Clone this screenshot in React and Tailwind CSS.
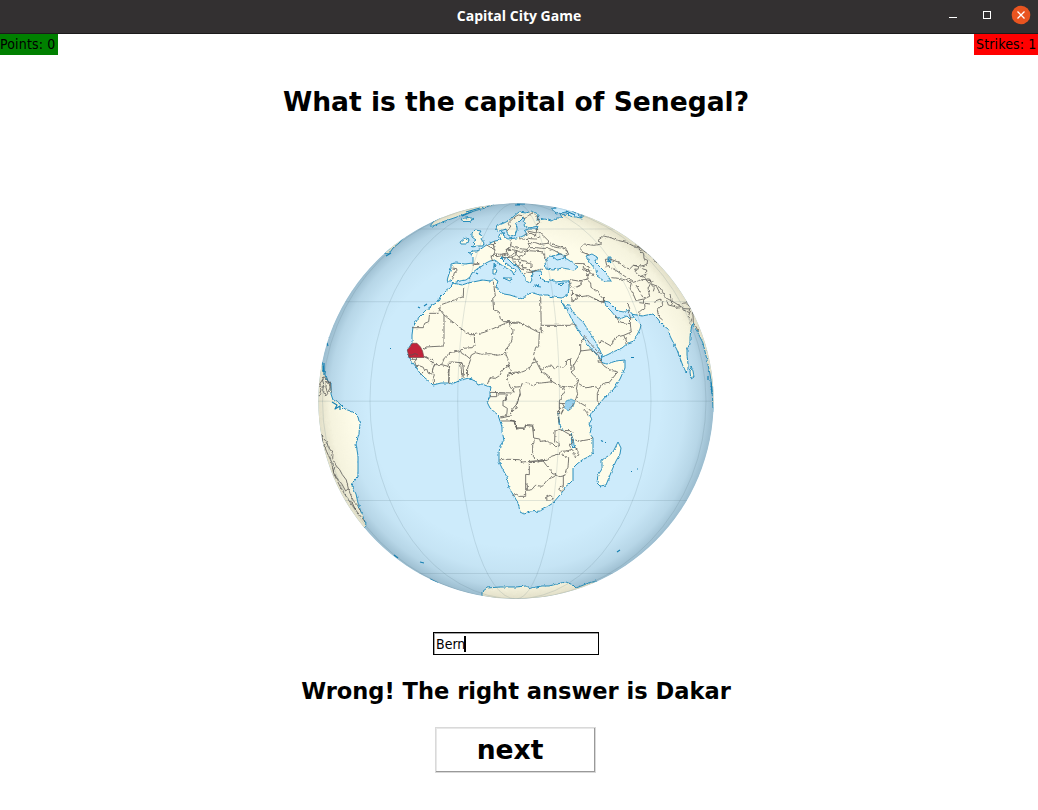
import React from "react";

const AFRO_EURASIA =
  "M453 283L450 288L446 291L440 297L438 302L431 306L425 311L419 317L413 327L412 335L412 343L408 349L409 357L413 363L417 368L419 372L425 378L430 382L433 385L441 383L450 383L452 384L461 380L469 378L472 379L475 381L478 385L482 384L487 386L491 387L490 392L490 397L487 402L490 408L498 415L500 421L502 427L502 431L504 440L500 446L499 453L499 462L503 470L507 477L509 488L514 496L518 503L519 507L520 512L524 514L530 512L540 511L547 507L553 503L559 496L563 491L565 487L569 484L573 480L573 475L573 468L577 464L582 460L588 457L593 453L593 446L593 438L590 434L591 429L589 424L592 419L590 416L593 411L600 403L606 396L613 390L620 379L625 368L625 360L616 361L607 364L603 363L600 360L602 357L607 355L613 352L622 348L628 343L634 341L638 333L640 329L641 325L636 320L631 314L642 316L647 315L653 314L658 319L660 322L663 325L668 329L670 336L677 350L683 366L686 372L688 370L688 363L687 356L687 350L690 343L690 337L691 330L692 324L697 331L703 343L707 360L710 374L712 387L713 410L740 410L740 190L582 190L582 218L577 215L574 217L570 212L565 215L560 213L562 218L557 218L551 221L545 219L537 220L538 214L532 211L526 213L519 212L513 217L508 221L504 223L497 226L496 229L499 231L503 230L506 229L508 235L512 237L515 235L517 230L517 227L516 224L519 222L523 218L525 219L523 222L525 226L529 228L538 226L537 229L528 229L525 231L527 234L521 237L516 238L508 239L504 237L503 232L499 235L501 240L495 241L490 243L485 246L478 251L474 251L468 252L472 255L473 258L473 263L465 264L456 263L451 264L451 268L448 277L447 281L451 281L453 283L460 281L466 280L470 277L472 273L477 269L482 266L486 263L490 261L495 260L500 264L506 268L512 271L514 275L516 270L511 267L506 263L501 258L505 257L508 259L513 264L518 267L521 272L523 275L526 277L526 281L530 283L532 280L530 276L533 275L532 271L537 271L541 271L541 274L539 276L542 279L547 282L551 280L556 282L563 281L569 281L569 288L568 295L562 298L553 297L547 295L540 295L533 293L527 294L523 299L516 297L510 295L504 294L500 292L496 287L498 281L495 279L490 281L483 280L473 282L468 283L462 285Z";

const ISLANDS = [
  "M472 233L475 230L481 231L479 234L482 236L481 239L484 243L483 246L478 246L471 247L475 244L473 242L476 240L472 237Z",
  "M460 242L465 238L469 239L467 244L461 244Z",
  "M461 219L468 217.500L474 218.500L470 221.500L463 221.500Z",
  "M618 442L621 448L620 454L616 461L612 470L606 485L600 486L597 483L598 475L602 469L602 460L608 456L613 452Z",
  "M503 278L512 278L510 281Z",
  "M493 269L497 269L496 274L493 274Z",
  "M494 263L495 265L494 268Z",
  "M534 285L541 286",
  "M559 284L564 283L561 286Z",
  "M691 366L693 371L694 377L691 379L690 372Z",
  "M430 226L434 221L449 213L469 207L483 204L500 202L491 205L484 208L474 211L465 214L454 218L442 222L433 226Z",
  "M384 253L389 249L395 243L404 237L399 243L393 248L389 254Z",
];

const SOUTH_AMERICA =
  "M300 370L322 362L325 374L326 379L331 384L331 394L333 400L339 403L342 406L345 409L353 412L358 417L360 425L359 433L356 444L358 456L358 476L354 480L352 486L356 494L358 503L361 512L366 524L360 535L330 520Z";

const ANTARCTICA =
  "M470 610L482 598L482 592L487 588L500 587L516 587L526 586L531 588L542 586L549 586L557 584L566 582L573 585L576 588L586 584L596 581L610 590L560 615Z";

const WATERS = [
  "M545 262L549 256L556 257L558 254L562 258L567 259L573 263L578 267L574 270L562 268L553 270L546 269Z",
  "M552 256L557 255L561 254L566 256L562 259L557 260Z",
  "M586 256L592 254L597 257L595 262L600 267L606 273L611 281L604 281L597 276L596 270L591 264Z",
  "M608 257L611 257L611 261L608 262Z",
  "M561 301L567 309L571 318L577 328L583 338L588 345L596 354L601 360L602 355L598 346L590 333L583 322L575 315L568 304L565 308Z",
  "M604 301L609 302L614 307L618 311L624 312L629 310L633 315L630 319L627 316L620 319L616 317L611 311L607 307Z",
  "M558 413L559 424L562 430L560 424Z",
  "M571 434L573 439L575 449L572 446Z",
  "M560 205L552 209L556 214L566 212L570 216L581 218L577 212L566 207Z",
];

/* Borders grouped by map tile; each tile uses a grid of thirds of a pixel. */
const BORDERS = [
  {
    at: "translate(310 300) scale(.33333)",
    d: [
      "M306 83L340 83L344 70L356 65L359 40L385 40L389 28L391 15L460 -10L461 -38",
      "M389 28L402 45L462 92L480 104L493 104L523 97L598 65",
      "M402 45L402 138L348 141L343 148L336 141",
      "M493 104L494 134L487 143L460 145L450 152L421 158L403 174L395 194L372 194L367 177L343 170",
      "M450 150L455 160L469 167L480 176L484 165L497 158L514 163L541 161L558 166L580 163L586 155",
      "M421 186L456 188M418 188L416 248M449 188L453 198L456 235M456 188L459 198L462 234M472 230L473 204L482 178",
      "M598 65L600 79L609 92L606 118L602 131L586 150L588 163L593 175L599 195L577 211L570 226L556 235L540 233L532 253",
      "M550 -55L556 -12L548 -5L551 28L567 39L571 56L581 65L598 65L610 70L630 69",
      "M599 195L588 197L603 207L605 222L630 215M599 217L592 231L600 260L612 277L611 262L630 260M540 277L608 279",
      "M540 290L560 290L560 278M565 282L588 282L590 300L579 302L579 317L592 325L590 347L572 351",
      "M572 363L612 363L616 378L624 389M630 281L622 310L605 330L600 348L574 354M372 194L367 214L373 225L369 235L371 252M395 194L419 200L414 220L418 230L416 248",
      "M301 183L306 178L320 178L319 172M320 178L314 185L319 200L330 198L340 202L343 211L335 221L330 223M343 170L358 178L367 191",
      "M343 211L350 207L355 220L367 222M26 290L33 270L29 252L37 240L41 251L38 271L47 288L53 281L48 262L49 244L57 246L60 264L54 276M37 240L42 230L51 239L61 249L64 278",
    ],
  },
  {
    at: "translate(510 300) scale(.33333)",
    d: [
      "M92 -10L94 98M95 76L180 76L185 72L200 76M97 98L85 97L26 66L0 68",
      "M88 98L86 139L77 142L70 168L79 185L66 190L51 210L26 220L15 216L4 222L0 220",
      "M79 185L89 205L98 209L112 198L128 199L134 208L144 197L157 204L168 194L172 180L181 176L183 206L191 196L206 170L212 153L244 149L263 163L273 182",
      "M191 197L194 208L183 216L190 224L206 240L203 249L228 264L252 259L268 265L281 249L298 247L323 216L298 209L281 197L273 186L265 187L264 178L273 182",
      "M268 265L262 280L262 305L268 314M89 205L96 217L112 224L127 245L150 258L178 263L190 260L203 249L199 267L203 282L196 300L230 320L242 333",
      "M127 245L102 248L82 250L69 258L52 248L36 253L29 268L31 285L22 304L18 325L0 340",
      "M160 262L165 274L154 293L148 303L148 324L149 342M148 310L166 311M158 312L163 321L153 326L147 322M160 328L154 338M178 330L192 310",
      "M0 362L12 360L19 384L43 385L47 376L68 379L70 395M212 153L212 130L223 114L221 105L238 128L263 155L273 162",
      "M280 -6L281 8L249 -5M315 45L328 66L361 71L362 82L364 96L341 106L315 113L303 138L275 122L271 132L266 125",
      "M341 106L352 130M358 43L362 55L361 71M352 9L359 25L355 40M378 -45L403 0L405 22L390 34L389 44M388 8L420 12",
      "M433 4L451 -3L458 13L442 30L446 50L458 60M480 -18L485 9L500 22L512 20L520 30L539 38L535 50L545 59L540 71M518 10L532 8L542 24L537 31L549 42L550 69L558 80L565 95",
    ],
  },
  {
    at: "translate(510 410) scale(.33333)",
    d: [
      "M0 31L13 34L20 54L44 54L47 44L68 45L71 84L89 87L91 95L110 91L118 98L127 100L137 110L148 108L147 98L134 94L135 63L147 58M71 84L72 94L68 105L68 138L86 154",
      "M-32 150L-20 148L0 148L28 149L36 156L74 153L98 154L104 148L58 157L58 194L47 193L47 259L30 259L20 253L7 256",
      "M83 157L98 151L110 167L119 177L126 190L137 195L133 200L113 208L97 229L76 226L65 239L52 241L52 224L47 221",
      "M98 152L112 151L124 139L147 132L168 139L176 146L174 172L169 181L164 197L150 200L137 195M147 132L152 124L170 123L186 118L178 106L189 97L185 77L157 61L147 58",
      "M185 118L190 123L196 143L203 135L205 122L194 115M196 90L207 94L241 88L249 82M157 61L178 62L190 70M160 197L160 227L153 230L146 238L154 244L160 238",
      "M110 260L122 256L130 265L122 273L111 273Z M142 0L144 12L147 38M160 0L153 14L148 11M220 -5L230 7L235 18",
    ],
  },
  {
    at: "translate(440 200) scale(.33333)",
    d: [
      "M37 204L50 206L51 212L43 218L38 238M95 191L118 193M118 190L98 196M140 135L152 142L165 150L162 163L153 170L158 183",
      "M165 150L162 145L150 139M150 132L163 135L164 124M163 145L160 135M153 170L165 162L180 163L197 160L205 164L197 150L212 138L215 118",
      "M165 165L170 170L185 167L198 162M185 167L194 175L202 173L212 166L222 160L231 152L212 148L197 150",
      "M212 138L224 142L239 146L260 148L268 143L268 128L262 119L240 116M231 152L242 157L263 152L260 148M231 152L228 163L236 170L252 163L262 154",
      "M202 173L216 171L228 165M216 171L217 177L235 178L241 188L235 200L220 182M236 170L244 181L260 184L263 190L270 190M241 188L250 185M235 200L247 210L250 202L260 205L272 210L274 216L300 208L309 208M250 202L242 195",
      "M272 184L274 204M263 152L280 153L305 155L312 165L318 181M268 143L290 143L305 145L325 145L340 150L366 164M268 128L287 128L300 133L324 130L326 123L310 107L302 101L289 98L290 85",
      "M254 103L273 100L289 108M262 93L289 99M255 111L270 116L287 117L300 110M290 75L299 67L292 50L284 43L276 39L265 47L254 56M254 56L246 47L235 45L229 48L214 60L205 70L210 83L200 90",
      "M324 130L338 140L353 143L367 144L381 153L386 163L370 170M262 210L258 218L252 222M262 217L278 217L288 210",
    ],
  },
  {
    at: "translate(550 200) scale(.33333)",
    d: [
      "M0 127L22 138L45 145L53 154L48 162M118 165L93 155L93 142L104 132L131 136L155 132L144 121L161 108L181 113L203 121L229 127L250 138L265 139L269 150L281 160L282 176L293 181L291 192L278 198L250 196L239 207L224 202L207 187L180 177L166 178L170 196L180 203",
      "M76 190L99 191L119 203L112 210L99 202M96 204L111 215L123 211L115 225L109 220M112 209L126 220L132 231",
      "M60 239L85 243L105 239L115 236L109 222M109 237L122 249L123 262L140 272L151 287L165 303L151 305L115 287L93 290L73 283L64 274M59 242L60 257L70 265L94 254L93 242",
      "M64 280L66 304L83 296L80 286L94 290M164 203L170 200M184 233L205 235L226 240L244 249L240 264L250 283L258 302L281 297L299 289L294 267L300 253L286 238L271 240L250 247L232 234L207 217L184 203",
      "M265 139L280 152L300 165L315 182L326 194M250 196L266 200L264 208L254 207L261 222L270 230L290 222L290 210L272 205M272 228L287 235L300 238L305 252L329 262L337 274L343 287L352 296L374 308L392 319L402 326L420 327M305 255L313 264L310 274M318 256L331 282M350 301L355 315L380 321M290 240L310 244",
    ],
  },
  {
    at: "translate(310 410) scale(.33333)",
    d: [
      "M36 72L40 85L50 96L55 111L69 131L68 145L79 168L89 179L97 194L109 210L115 236L120 250L130 272L143 286L151 304M36 72L38 95L50 125L65 157L71 190L90 229L112 265L137 300L164 334",
      "M75 170L70 183L79 202L95 221L107 243L115 236M125 275L137 300",
    ],
  },
];

const SPECKS =
  "M390 348.500h1M601 440.500l2 1M605 442.500h1M631 471.500h1M637 469h1M617 552l3-2M420 562l4 1M631 357.500h3M418 307l2 1M424 306l3-2M476 273l2 1M394 555l4 3M430 579l8 4M327 338l2-1M327 343l1 3M323 366v6M324 363v12M710 345v4M708 376v4M711 382l1 12M566 211l9 4M568 208l8 5M517 204h8M515 205h5M462 216l9-4M466 212l14-4M384 253l6-5M386 256l5-3M332 402l5 3l-2 4l5-3v4M608 259l3 4";

function Globe() {
  return (
    <svg className="mt-[84px] h-[398px] w-[396px] shrink-0" viewBox="318 202 396 398" aria-hidden="true">
      <defs>
        <clipPath id="disc">
          <circle cx="516" cy="401" r="197.7" />
        </clipPath>
        <radialGradient id="limb" cx="516" cy="401" r="198" fx="508" fy="396" gradientUnits="userSpaceOnUse">
          <stop offset="0.74" stopColor="#123c55" stopOpacity="0" />
          <stop offset="0.86" stopColor="#123c55" stopOpacity="0.04" />
          <stop offset="0.94" stopColor="#123c55" stopOpacity="0.12" />
          <stop offset="1" stopColor="#123c55" stopOpacity="0.27" />
        </radialGradient>
        <radialGradient id="landLimb" cx="516" cy="401" r="198" gradientUnits="userSpaceOnUse">
          <stop offset="0.82" stopColor="#fefce9" />
          <stop offset="0.94" stopColor="#f5f3de" />
          <stop offset="1" stopColor="#e2dfc8" />
        </radialGradient>
        <filter id="rugged" x="318" y="202" width="396" height="398" filterUnits="userSpaceOnUse" colorInterpolationFilters="sRGB">
          <feTurbulence type="fractalNoise" baseFrequency="0.28" numOctaves="2" seed="4" />
          <feDisplacementMap in="SourceGraphic" scale="3" xChannelSelector="R" yChannelSelector="G" />
        </filter>
      </defs>
      <g clipPath="url(#disc)" strokeLinejoin="round">
        <rect x="317" y="202" width="398" height="398" fill="#cdebfb" />
        <circle cx="516" cy="401" r="198" fill="url(#limb)" />
        <g filter="url(#rugged)">
          <g fill="url(#landLimb)" stroke="#2089b8" strokeWidth="0.95">
            <path d={AFRO_EURASIA} />
            <path d={SOUTH_AMERICA} />
            <path d={ANTARCTICA} />
            {ISLANDS.map((d) => (
              <path key={d} d={d} />
            ))}
          </g>
          <g fill="#cdebfb" stroke="#2089b8" strokeWidth="0.9">
            {WATERS.map((d) => (
              <path key={d} d={d} />
            ))}
          </g>
          <path
            d="M566 401L571 399L575 401L573 407L568 411L565 407Z"
            fill="#9bd2f0"
            stroke="#2089b8"
            strokeWidth="0.6"
          />
          {BORDERS.map((tile) => (
            <g key={tile.at} transform={tile.at} fill="none" stroke="#656460" strokeWidth="2.6">
              {tile.d.map((d) => (
                <path key={d} d={d} />
              ))}
            </g>
          ))}
        </g>
        <path d={SPECKS} fill="none" stroke="#1580b3" strokeWidth="1.2" />
        <path
          d="M411.500 344L413 343.300L417 343.300L420.500 347L422.500 351L424 357.500L409 357.500L408.500 355L407.300 350L410 347Z"
          fill="#c2233a"
          stroke="#73494a"
          strokeWidth="0.7"
        />
        <path d="M408 355.300L412 355L415 353.500L418 355" fill="none" stroke="#6b4a4a" strokeWidth="0.9" />
        <g fill="none" stroke="#54717c" strokeOpacity="0.19" strokeWidth="0.9">
          <path d="M317 229H715M317 301.700H715M317 401.200H715M317 500.500H715M317 573.500H715" />
          <path d="M516 203A58.300 198 0 0 0 516 599M516 203A146 198 0 0 0 516 599M516 203A193.500 198 0 0 0 516 599" />
          <path d="M516 203A43.500 198 0 0 1 516 599M516 203A135 198 0 0 1 516 599M516 203A190 198 0 0 1 516 599" />
        </g>
      </g>
    </svg>
  );
}

function TitleBar() {
  return (
    <header className="grid h-[34px] shrink-0 grid-cols-[1fr_auto_1fr] items-center border-b border-[#1c1b1b] bg-[#333031]">
      <span />
      <h1 className="pb-0.5 font-['Open_Sans','Noto_Sans',sans-serif] text-[14px] leading-none font-bold text-white">
        Capital City Game
      </h1>
      <div className="flex items-center justify-end pr-[7px] pb-[3px]">
        <svg className="h-5 w-[82px]" viewBox="0 0 82 20" fill="none">
          <path d="M0 12.500H8" stroke="#fff" />
          <rect x="34.500" y="6.500" width="7" height="7" stroke="#fff" />
          <circle cx="72" cy="10" r="9.300" fill="#e95420" />
          <path d="M68.500 6.500L75.500 13.500M75.500 6.500L68.500 13.500" stroke="#fff" strokeWidth="1.300" />
        </svg>
      </div>
    </header>
  );
}

export default function App() {
  return (
    <div className="flex h-[810px] w-[1038px] flex-col overflow-hidden bg-white font-['DejaVu_Sans',sans-serif] text-black">
      <TitleBar />
      <div className="flex h-[21px] shrink-0 justify-between font-['DejaVu_Sans_Condensed','DejaVu_Sans',sans-serif] text-[14px] leading-[21px] tracking-[0.15px] whitespace-nowrap">
        <span className="w-[58px] bg-[#008000]">Points: 0</span>
        <span className="w-16 bg-[#ff0000] pl-0.5">Strikes: 1</span>
      </div>
      <main className="flex w-[1032px] flex-col items-center">
        <h2 className="mt-[31px] text-[26.550px] leading-8 font-bold whitespace-nowrap">
          What is the capital of Senegal?
        </h2>
        <Globe />
        <div className="mt-8 flex h-[23px] w-[166px] items-center border border-black px-[2px] font-['DejaVu_Sans_Condensed','DejaVu_Sans',sans-serif] text-[14px] leading-none shadow-[inset_1px_1px_0_#a3a3a3]">
          <span>Bern</span>
          <span className="-ml-px h-4 w-0.5 bg-black" />
        </div>
        <p className="mt-[22px] text-[22.550px] leading-7 font-bold whitespace-nowrap">
          Wrong! The right answer is Dakar
        </p>
        <button className="mt-[22px] mr-px h-[46px] w-[161px] border border-[#d9d9d9] bg-white pr-[11px] text-[26.550px] leading-none font-bold shadow-[inset_-1px_-1px_0_#999,inset_1px_1px_0_#e8e8e8]">
          next
        </button>
      </main>
    </div>
  );
}
